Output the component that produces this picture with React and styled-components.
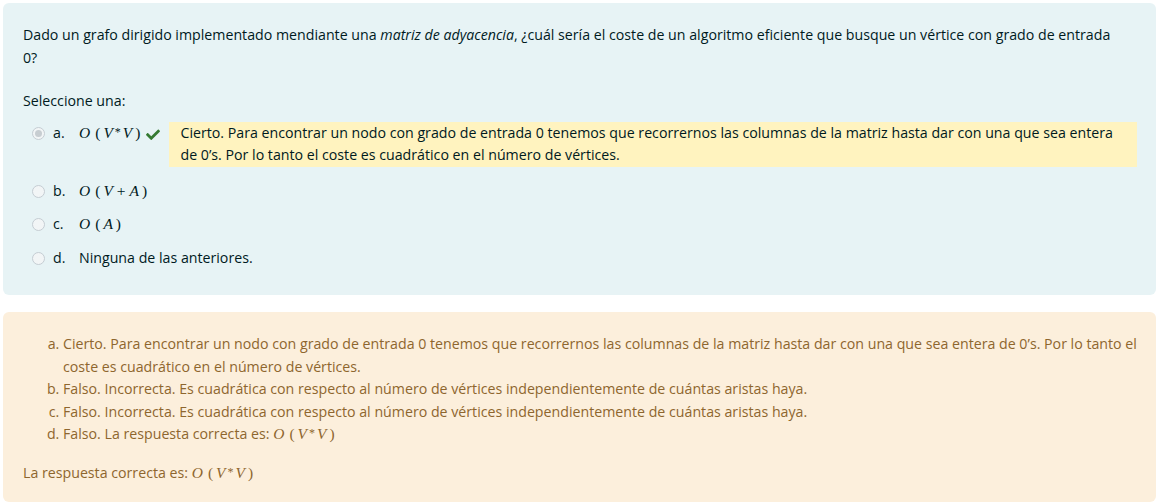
import React from "react";
import styled, { createGlobalStyle } from "styled-components";

const GlobalStyle = createGlobalStyle`
  html, body {
    margin: 0;
    padding: 0;
    background: #ffffff;
  }
  body {
    font-family: "Open Sans", "Noto Sans", sans-serif;
    font-size: 14.2px;
    line-height: 22.5px;
    color: #001a1e;
  }
`;

const Page = styled.div`
  display: flex;
  flex-direction: column;
  gap: 17px;
  padding: 3px 2px 3px 3px;
`;

// QUESTION -------------------------------------------------------------
const Formulation = styled.div`
  background: #e7f3f5;
  border-radius: 6px;
  padding: 21px 20px 15px 20px;
  color: #001a1e;
`;

const QText = styled.p`
  margin: 0 14px 21px 0;
`;

const Prompt = styled.div`
  margin-bottom: 9px;
`;

const Answers = styled.div`
  display: flex;
  flex-direction: column;
  padding-left: 9px;
`;

const Option = styled.div`
  display: flex;
  align-items: flex-start;
  margin-bottom: ${(p) => (p.$feedback ? "13px" : "11px")};
`;

const Radio = styled.span`
  flex: none;
  box-sizing: border-box;
  width: 13px;
  height: 13px;
  margin-top: 5px;
  border-radius: 50%;
  border: 1px solid #c5cdd3;
  background: #f2f5f6;
  display: flex;
  align-items: center;
  justify-content: center;

  &::after {
    content: "";
    width: 7px;
    height: 7px;
    border-radius: 50%;
    background: ${(p) => (p.$checked ? "#c7cdd1" : "transparent")};
  }
`;

const Letter = styled.span`
  flex: none;
  width: 26px;
  margin-left: 8px;
`;

const OptText = styled.span`
  flex: none;
  white-space: nowrap;
`;

const Check = styled.svg`
  flex: none;
  width: 14px;
  height: 12px;
  margin: 6px 0 0 6px;
  fill: #357a32;
`;

const Feedback = styled.div`
  flex: 1;
  margin: 0 -1px 0 9px;
  padding: 0 18px 0 11px;
  background: #fff3bf;
  color: #001a1e;
`;

// OUTCOME --------------------------------------------------------------
const Outcome = styled.div`
  background: #fcefdc;
  border-radius: 6px;
  padding: 21px 18px 17px 20px;
  color: #8e662e;
`;

const FeedbackList = styled.ol`
  list-style: lower-alpha;
  margin: 0 0 15px 0;
  padding-left: 40px;
`;

const FeedbackItem = styled.li`
  padding-left: 0;
`;

const Correct = styled.div``;

// MATH -----------------------------------------------------------------
const MathSpan = styled.span`
  font-family: "Liberation Serif", "DejaVu Serif", serif;
  font-size: 15.5px;
  white-space: nowrap;
`;

const Var = styled.i`
  font-style: italic;
`;

const Paren = styled.span`
  margin: ${(p) => (p.$close ? "0 0 0 3px" : "0 3px 0 5px")};
`;

const Star = styled.span`
  font-size: 12px;
  position: relative;
  top: -2px;
  margin: 0 2px;
`;

const Plus = styled.span`
  margin: 0 4px;
`;

const BigO = ({ children }) => (
  <MathSpan>
    <Var>O</Var>
    <Paren>(</Paren>
    {children}
    <Paren $close>)</Paren>
  </MathSpan>
);

const VV = () => (
  <BigO>
    <Var>V</Var>
    <Star>*</Star>
    <Var>V</Var>
  </BigO>
);

const CheckIcon = () => (
  <Check viewBox="0 0 512 440">
    <path d="M173.9 428.4L7.5 262c-10-10-10-26.2 0-36.2l36.2-36.2c10-10 26.2-10 36.2 0L192 301.7 432.1 61.6c10-10 26.2-10 36.2 0l36.2 36.2c10 10 10 26.2 0 36.2L210.1 428.4c-10 10-26.2 10-36.2 0z" />
  </Check>
);

const App = () => {
  return (
    <Page>
      <GlobalStyle />
      <Formulation>
        <QText>
          Dado un grafo dirigido implementado mendiante una <em>matriz de adyacencia</em>, ¿cuál sería el coste de un
          algoritmo eficiente que busque un vértice con grado de entrada 0?
        </QText>
        <Prompt>Seleccione una:</Prompt>
        <Answers>
          <Option $feedback>
            <Radio $checked />
            <Letter>a.</Letter>
            <OptText><VV /></OptText>
            <CheckIcon />
            <Feedback>
              Cierto. Para encontrar un nodo con grado de entrada 0 tenemos que recorrernos las columnas de la matriz
              hasta dar con una que sea entera de 0’s. Por lo tanto el coste es cuadrático en el número de vértices.
            </Feedback>
          </Option>
          <Option>
            <Radio />
            <Letter>b.</Letter>
            <OptText>
              <BigO>
                <Var>V</Var>
                <Plus>+</Plus>
                <Var>A</Var>
              </BigO>
            </OptText>
          </Option>
          <Option>
            <Radio />
            <Letter>c.</Letter>
            <OptText>
              <BigO>
                <Var>A</Var>
              </BigO>
            </OptText>
          </Option>
          <Option>
            <Radio />
            <Letter>d.</Letter>
            <OptText>Ninguna de las anteriores.</OptText>
          </Option>
        </Answers>
      </Formulation>
      <Outcome>
        <FeedbackList>
          <FeedbackItem>
            Cierto. Para encontrar un nodo con grado de entrada 0 tenemos que recorrernos las columnas de la matriz hasta
            dar con una que sea entera de 0’s. Por lo tanto el coste es cuadrático en el número de vértices.
          </FeedbackItem>
          <FeedbackItem>
            Falso. Incorrecta. Es cuadrática con respecto al número de vértices independientemente de cuántas aristas haya.
          </FeedbackItem>
          <FeedbackItem>
            Falso. Incorrecta. Es cuadrática con respecto al número de vértices independientemente de cuántas aristas haya.
          </FeedbackItem>
          <FeedbackItem>
            Falso. La respuesta correcta es: <VV />
          </FeedbackItem>
        </FeedbackList>
        <Correct>
          La respuesta correcta es: <VV />
        </Correct>
      </Outcome>
    </Page>
  );
};

export default App;
